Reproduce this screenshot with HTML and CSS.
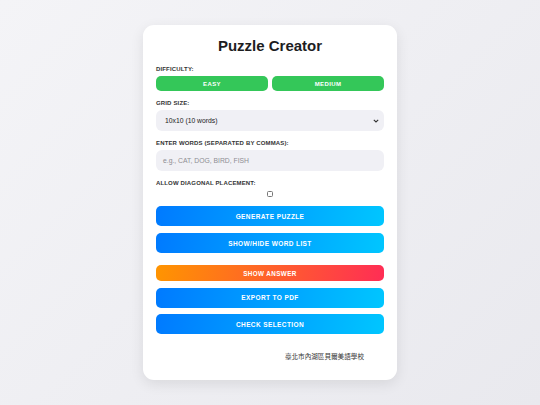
FILE: index.html
```html
<!DOCTYPE html>
<html lang="zh-Hant">
<head>
<meta charset="utf-8">
<link rel="stylesheet" href="styles.css">
</head>
<body>
<div class="card">
  <h1 class="title">Puzzle Creator</h1>
  <div class="field">
    <div class="label">Difficulty:</div>
    <div class="diff-row">
      <button class="btn green">Easy</button>
      <button class="btn green">Medium</button>
    </div>
  </div>
  <div class="field">
    <div class="label">Grid Size:</div>
    <div class="select">
      <span>10x10 (10 words)</span>
      <svg class="chev" width="6" height="4" viewBox="0 0 6 4"><path d="M0.8 0.8 L3 3 L5.2 0.8" fill="none" stroke="#333" stroke-width="1.1"/></svg>
    </div>
  </div>
  <div class="field">
    <div class="label">Enter words (separated by commas):</div>
    <div class="input">e.g., CAT, DOG, BIRD, FISH</div>
  </div>
  <div class="field last">
    <div class="label">Allow diagonal placement:</div>
    <div class="check-row"><span class="checkbox"></span></div>
  </div>
  <div class="actions">
    <button class="btn blue big">Generate Puzzle</button>
    <button class="btn blue big">Show/Hide Word List</button>
  </div>
  <div class="actions second">
    <button class="btn orange">Show Answer</button>
    <button class="btn blue big">Export to PDF</button>
    <button class="btn blue big">Check Selection</button>
  </div>
  <div class="footer">臺北市內湖區貝爾美語學校</div>
</div>
</body>
</html>
```
FILE: styles.css
```css
html, body {
  margin: 0;
  padding: 0;
}
body {
  width: 540px;
  height: 405px;
  background: linear-gradient(135deg, #f4f4f7 0%, #e9e9ee 100%);
  font-family: "Liberation Sans", Arial, "Noto Sans CJK TC", sans-serif;
  display: flex;
  justify-content: center;
  align-items: flex-start;
  overflow: hidden;
}
.card {
  margin-top: 25px;
  width: 254px;
  box-sizing: border-box;
  padding: 12px 13px 19.5px;
  background: #ffffff;
  border-radius: 11px;
  box-shadow: 0 4px 14px rgba(0, 0, 0, 0.09);
  display: flex;
  flex-direction: column;
}
.title {
  margin: 0 0 11px;
  text-align: center;
  font-size: 15px;
  line-height: 17px;
  font-weight: bold;
  color: #1d1d1f;
}
.field {
  margin-bottom: 8px;
}
.field.last {
  margin-bottom: 9px;
}
.label {
  font-size: 6px;
  line-height: 8px;
  font-weight: bold;
  text-transform: uppercase;
  letter-spacing: 0.15px;
  color: #333;
  margin-bottom: 3px;
}
.diff-row {
  display: flex;
  gap: 4px;
}
.btn {
  border: none;
  margin: 0;
  padding: 0;
  font-family: inherit;
  color: #fff;
  font-weight: bold;
  text-transform: uppercase;
  letter-spacing: 0.4px;
  border-radius: 5px;
  display: flex;
  align-items: center;
  justify-content: center;
  width: 100%;
}
.green {
  flex: 1;
  height: 15px;
  background: #34c759;
  font-size: 6px;
}
.select, .input {
  height: 21px;
  box-sizing: border-box;
  background: #f0f0f5;
  border-radius: 6px;
  display: flex;
  align-items: center;
  font-size: 6.8px;
}
.select {
  padding: 0 5px 0 9px;
  justify-content: space-between;
  color: #222;
}
.input {
  padding: 0 7px;
  color: #8e8e93;
}
.check-row {
  display: flex;
  justify-content: center;
  padding-top: 1px;
}
.checkbox {
  box-sizing: border-box;
  width: 6px;
  height: 6px;
  border: 0.8px solid #777;
  border-radius: 1.5px;
  background: #fff;
}
.actions {
  display: flex;
  flex-direction: column;
  gap: 7px;
}
.second {
  margin-top: 12px;
  gap: 6.5px;
}
.big {
  height: 20px;
  font-size: 6.5px;
}
.blue {
  background: linear-gradient(100deg, #007aff 0%, #00c6ff 100%);
}
.orange {
  height: 16px;
  font-size: 6.3px;
  background: linear-gradient(100deg, #ff9500 0%, #ff2d55 100%);
}
.footer {
  margin-top: 17.5px;
  padding-right: 20px;
  text-align: right;
  font-size: 6.6px;
  line-height: 9px;
  color: #333;
  font-family: "Noto Sans CJK TC", sans-serif;
}
```
